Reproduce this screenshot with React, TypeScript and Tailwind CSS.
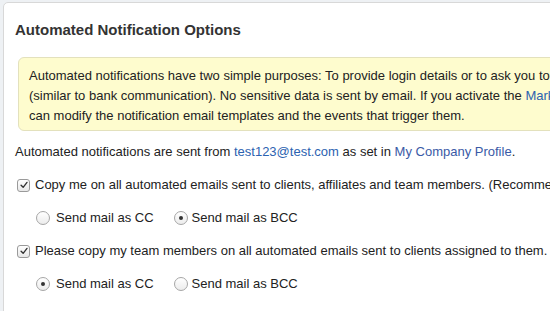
function Checkbox() {
  return (
    <span className="inline-flex h-[13px] w-[13px] shrink-0 items-center justify-center rounded-[3px] border border-[#9a9a9a] bg-gradient-to-b from-white to-[#e8e8e8]">
      <svg viewBox="0 0 12 12" className="h-[10px] w-[10px]">
        <path d="M2.5 6.2 L5 8.8 L9.6 2.8" fill="none" stroke="#333" strokeWidth="1.6" strokeLinecap="round" strokeLinejoin="round" />
      </svg>
    </span>
  )
}

function Radio({ checked }: { checked?: boolean }) {
  return (
    <span className="inline-flex h-[14px] w-[14px] shrink-0 items-center justify-center rounded-full border border-[#a6a6a6] bg-gradient-to-b from-white to-[#ececec]">
      {checked && <span className="h-[4px] w-[4px] rounded-full bg-[#333]" />}
    </span>
  )
}

function RadioRow({ cc }: { cc: boolean }) {
  return (
    <div className="flex h-[20px] items-center pl-[21px]">
      <label className="flex items-center gap-[6px]">
        <Radio checked={cc} />
        <span>Send mail as CC</span>
      </label>
      <label className="ml-[20px] flex items-center gap-[4px]">
        <Radio checked={!cc} />
        <span>Send mail as BCC</span>
      </label>
    </div>
  )
}

export default function App() {
  return (
    <div
      className="h-[311px] w-[550px] overflow-hidden bg-[#eef1f4] pl-[3px] pt-[2px] text-[13px] text-[#222]"
      style={{ fontFamily: '"Liberation Sans", Arial, sans-serif' }}
    >
      <div className="h-[400px] w-[720px] rounded-[5px] border border-[#d8d8d8] bg-white pl-[11px] pt-[17px]">
        <h2 className="h-[20px] text-[15px] font-bold leading-[20px] text-[#333]">Automated Notification Options</h2>

        <div className="ml-[3px] mt-[17px] rounded-[6px] border border-[#e3e1bd] bg-[#fefcce] pb-[4px] pl-[10px] pt-[8px] leading-[20px] whitespace-nowrap">
          <div>Automated notifications have two simple purposes: To provide login details or to ask you to verify an email address</div>
          <div>
            (similar to bank communication). No sensitive data is sent by email. If you activate the{' '}
            <span className="text-[#2c62b0]">Marketing Automation</span> add-on, you
          </div>
          <div>can modify the notification email templates and the events that trigger them.</div>
        </div>

        <div className="mt-[11px] h-[20px] leading-[20px] whitespace-nowrap">
          Automated notifications are sent from <span className="text-[#2c62b0]">test123@test.com</span> as set in{' '}
          <span className="text-[#3a5aa6]">My Company Profile</span>.
        </div>

        <label className="mt-[13px] flex h-[20px] items-center gap-[5px] pl-[2px] whitespace-nowrap">
          <Checkbox />
          <span>Copy me on all automated emails sent to clients, affiliates and team members. (Recommended)</span>
        </label>

        <div className="mt-[13px]">
          <RadioRow cc={false} />
        </div>

        <label className="mt-[13px] flex h-[20px] items-center gap-[5px] pl-[2px] whitespace-nowrap">
          <Checkbox />
          <span>Please copy my team members on all automated emails sent to clients assigned to them.</span>
        </label>

        <div className="mt-[13px]">
          <RadioRow cc={true} />
        </div>
      </div>
    </div>
  )
}
